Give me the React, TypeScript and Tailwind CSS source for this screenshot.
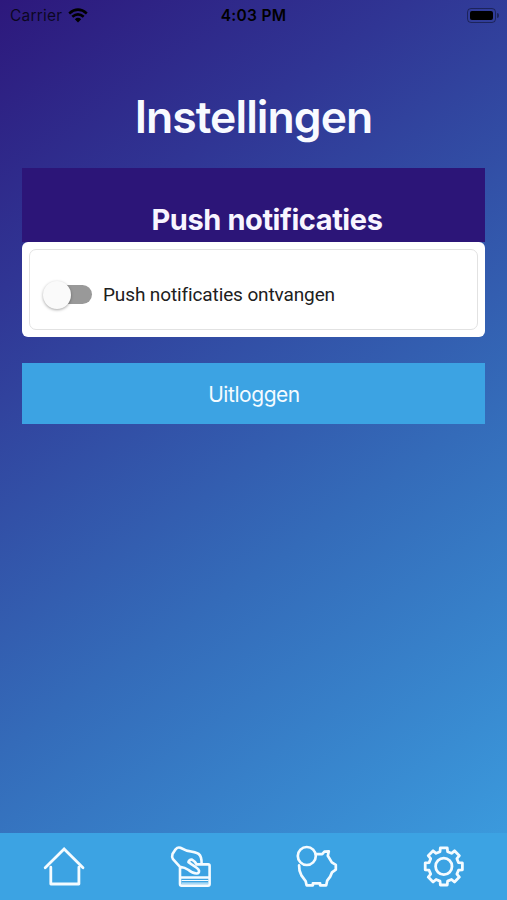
const gearPoints = Array.from({ length: 8 }, (_, i) => {
  const corners: [number, number][] = [
    [-14.5, 15.2],
    [-10.5, 18.9],
    [10.5, 18.9],
    [14.5, 15.2],
  ]

  return corners
    .map(([offset, radius]) => {
      const angle = ((i * 45 + offset) * Math.PI) / 180
      const x = 21.8 + radius * Math.sin(angle)
      const y = 21.4 - radius * Math.cos(angle)
      return `${x.toFixed(2)},${y.toFixed(2)}`
    })
    .join(" ")
}).join(" ")

const iconProps = {
  width: 44,
  height: 44,
  viewBox: "0 0 44 44",
  fill: "none",
  stroke: "#f4fbff",
  strokeWidth: 2.8,
  strokeLinecap: "round",
  strokeLinejoin: "round",
} as const

function HomeIcon() {
  return (
    <svg {...iconProps}>
      <path d="M4.2 22.7 23.1 4 42 22.7" strokeLinejoin="miter" />
      <path d="M9.8 22.2V39H37.9V22.2" />
    </svg>
  )
}

function PayIcon() {
  return (
    <svg {...iconProps} strokeWidth={2.6}>
      <path d="M12 21.8V39Q12 40.6 13.6 40.6H40Q41.6 40.6 41.6 39V20.8Q41.6 19.4 40.2 19.4H33.6Q34 11.5 30.6 8.9 28.5 7.3 18.6 5.6L12.4 2.8Q9.8 1.8 7.6 4.3L4.5 9Q3.6 11.5 5 14.2L12 21.8Q17 22.5 20.2 24.8 24.5 28.4 28.6 28.5 31.4 28.1 31 25.6 30.4 23.4 24 19.6L20.4 17.2Q21.2 14.3 24 14.6 26.8 16 28.6 19.4H33.6" />
      <path d="M13 32.5H41" strokeWidth="2.4" />
      <path d="M14 35.5H40M14 38.1H40" strokeWidth="1" />
    </svg>
  )
}

function PiggyIcon() {
  return (
    <svg {...iconProps} strokeWidth={2.7}>
      <circle cx="11.8" cy="11" r="9" />
      <path d="M21 9.1H27.2L29.4 6.7 33.8 6.3 32.8 10.8 36.8 17.4 40.8 19.8V24.7L37 27.4 35.2 31.6 32.2 35.6 31.2 40.3H25.1V38.3H17.9V40.3H11.6L10.7 36.3 6.4 30.4Q3.8 25.6 4.1 20.4" />
    </svg>
  )
}

function GearIcon() {
  return (
    <svg {...iconProps}>
      <polygon points={gearPoints} />
      <circle cx="21.8" cy="21.4" r="8.2" />
    </svg>
  )
}

function StatusBar() {
  return (
    <div className="grid h-[30px] grid-cols-3 items-center pl-[10px] pr-2 text-[15.5px] leading-[30px] text-black">
      <div className="flex items-center gap-[6px]">
        <span className="pt-px tracking-[0.2px] text-black/75">Carrier</span>
        <svg width="20" height="15" viewBox="0 0 20 15" fill="none" stroke="black" strokeWidth="2.6">
          <path d="M1.2 5.4Q10-2.2 18.8 5.4M4.3 8.8Q10 3.8 15.7 8.8" />
          <path d="M6.8 11.2Q10 8.4 13.2 11.2L10 14.4Z" fill="black" stroke="none" />
        </svg>
      </div>
      <span className="pt-px pr-[2px] text-center font-semibold tracking-[0.3px] whitespace-nowrap">4:03 PM</span>
      <div className="flex items-center justify-end gap-px">
        <div className="h-[15px] w-[29px] rounded-[4px] border border-black/40 p-[2px]">
          <div className="h-full rounded-[2px] bg-black" />
        </div>
        <div className="h-[5px] w-[2px] rounded-r bg-black/40" />
      </div>
    </div>
  )
}

function Switch() {
  return (
    <button role="switch" aria-checked="false" className="flex h-7 w-[49px] items-center">
      <span className="z-10 h-7 w-7 shrink-0 rounded-full bg-[#fafafa] shadow-[0_1px_3px_rgba(0,0,0,0.35)]" />
      <span className="-ml-3.5 h-[19px] w-[35px] rounded-r-full bg-[#999999]" />
    </button>
  )
}

export default function App() {
  return (
    <div className="flex h-[900px] w-[507px] flex-col overflow-hidden bg-[linear-gradient(145deg,#2d187c_0%,#303594_23%,#346bb9_60%,#3ca1e2_100%)] font-[Inter,sans-serif]">
      <StatusBar />

      <main className="flex flex-1 flex-col px-[22px]">
        <h1 className="mt-[59px] h-[79px] text-center text-[44.5px] leading-[56px] font-semibold tracking-[-0.95px] whitespace-nowrap text-[#f8faff]">
          Instellingen
        </h1>

        <section className="h-[169px] bg-[linear-gradient(#2c1578_74px,transparent_74px)]">
          <h2 className="flex h-[74px] items-end justify-center pb-1 pl-[27px] text-[29px] leading-[36px] font-bold tracking-[-0.42px] whitespace-nowrap text-[#f8f5ff]">
            Push notificaties
          </h2>
          <div className="h-[95px] rounded-[6px] bg-white p-[7px]">
            <div className="flex h-full items-center gap-[11px] rounded-[7px] border border-[#e2e2e2] pt-[10px] pl-[13px]">
              <Switch />
              <span className="pt-[2px] font-[Roboto,sans-serif] text-[19px] tracking-[-0.12px] whitespace-nowrap text-[#202020]">
                Push notificaties ontvangen
              </span>
            </div>
          </div>
        </section>

        <button className="mt-[26px] h-[61px] bg-[#3ca3e3] pt-[2px] pl-px text-[21px] tracking-[-0.45px] text-[#f4fbff]">
          Uitloggen
        </button>
      </main>

      <nav className="grid h-[67px] grid-cols-4 justify-items-center bg-[#3ca3e3] pt-3">
        <HomeIcon />
        <PayIcon />
        <PiggyIcon />
        <GearIcon />
      </nav>
    </div>
  )
}
